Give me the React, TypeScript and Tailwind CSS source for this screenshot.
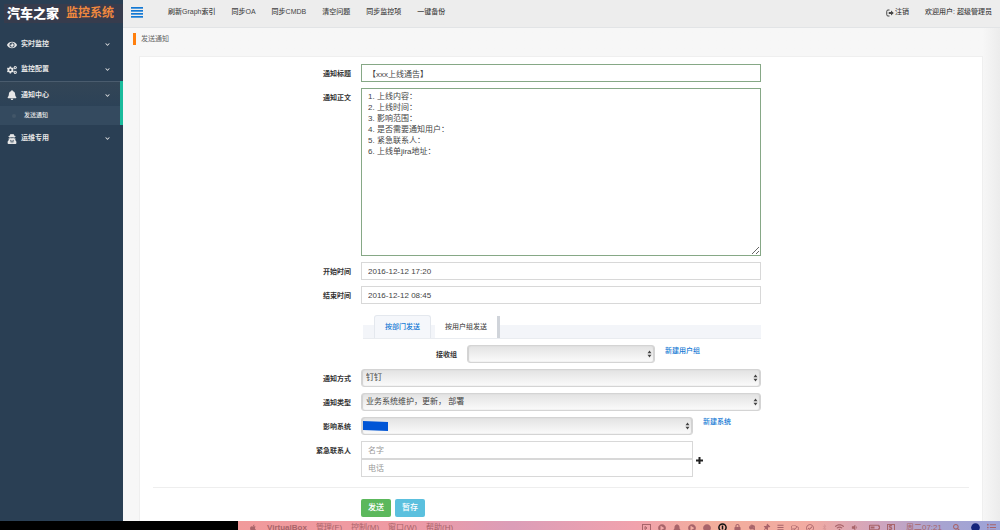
import React from 'react';
import {
  FaEye,
  FaCogs,
  FaBell,
  FaUserSecret,
  FaChevronDown,
  FaPlus,
  FaApple,
  FaEvernote,
  FaThumbtack,
  FaWifi,
  FaVolumeDown,
  FaLock,
  FaCircle,
  FaSearch,
  FaListUl,
  FaPlayCircle,
  FaBluetoothB,
  FaBars,
  FaRegComments,
  FaRegCheckCircle,
  FaBatteryHalf,
  FaStripeS,
} from 'react-icons/fa';
import { clsx } from 'clsx';

const tools = ['刷新Graph索引', '同步OA', '同步CMDB', '清空问题', '同步监控项', '一键备份'];

const menu = [
  { label: '实时监控', icon: FaEye },
  { label: '监控配置', icon: FaCogs },
  { label: '通知中心', icon: FaBell, children: ['发送通知'] },
  { label: '运维专用', icon: FaUserSecret },
];

const body = `1. 上线内容：
2. 上线时间：
3. 影响范围：
4. 是否需要通知用户：
5. 紧急联系人：
6. 上线单jira地址：`;

function Sidebar() {
  return (
    <aside className="w-[123px] shrink-0 bg-[#2a3f54] text-[#e7e7e7]">
      <div className="mt-1 ml-1 flex h-[19px] items-center gap-[7px] bg-[#373c4d] pl-[3px] whitespace-nowrap">
        <span className="text-[13px] font-black leading-[19px] text-white">汽车之家</span>
        <span className="text-[12px] font-bold leading-[19px] text-[#f0883e]">监控系统</span>
      </div>
      <nav className="mt-2 text-[7px] font-bold">
        {menu.map(({ label, icon: Icon, children }) => (
          <div key={label} className={clsx(children && 'border-r-[3px] border-[#1abb9c]')}>
            <a
              href="#"
              className={clsx(
                'flex h-[25px] items-center pt-0.5 pl-[7px]',
                children
                  ? 'border-t border-t-[#4a5c6e] bg-linear-to-b from-[#334556] to-[#2c4257] pr-[10px]'
                  : 'pr-[13px]'
              )}
            >
              <Icon size={10} className="mr-1" />
              <span className="flex-1">{label}</span>
              <FaChevronDown size={5} />
            </a>
            {children?.map((child) => (
              <a key={child} href="#" className="flex h-[19px] items-center bg-[#344a5f] pl-3 text-[6px] font-medium">
                <span className="mr-2 h-1 w-1 rounded-full bg-[#425668]" />
                {child}
              </a>
            ))}
          </div>
        ))}
      </nav>
    </aside>
  );
}

function SignOutIcon() {
  return (
    <svg width="8" height="8" viewBox="0 0 16 16" fill="none">
      <path d="M7 2H4a2.500 2.500 0 0 0-2.500 2.500v7A2.500 2.500 0 0 0 4 14h3" stroke="currentColor" strokeWidth="2" />
      <path d="M5.500 6.200H10V3l5.500 5-5.500 5V9.800H5.500z" fill="currentColor" />
    </svg>
  );
}

function TopBar() {
  return (
    <header className="flex h-7 items-center border-b border-[#e2e4e6] bg-[#ededed] pr-2 pb-0.5 pl-2 text-[7px] font-medium text-[#444]">
      <button type="button" aria-label="菜单" className="text-[#1479d4]">
        <svg width="12" height="12" viewBox="0 0 12 12" fill="currentColor">
          <rect y="0" width="12" height="1.700" />
          <rect y="3" width="12" height="1.700" />
          <rect y="6" width="12" height="1.700" />
          <rect y="9" width="12" height="1.700" />
        </svg>
      </button>
      <nav className="ml-[25px] flex flex-1 gap-4">
        {tools.map((t) => (
          <a key={t} href="#">{t}</a>
        ))}
      </nav>
      <a href="#" className="flex items-center gap-px">
        <SignOutIcon />
        注销
      </a>
      <span className="ml-4">欢迎用户: 超级管理员</span>
    </header>
  );
}

function Row({ label, htmlFor, children }: { label?: string; htmlFor?: string; children: React.ReactNode }) {
  return (
    <div className="grid grid-cols-[1fr_2fr_1fr]">
      <div className="h-[18px] pr-0.5 text-right text-[7px] font-bold leading-5 text-[#333]">
        {label && <label htmlFor={htmlFor}>{label}</label>}
      </div>
      <div className="px-2">{children}</div>
    </div>
  );
}

function Select({ id, options, className, children }: {
  id: string;
  options: string[];
  className?: string;
  children?: React.ReactNode;
}) {
  return (
    <div className={clsx('relative', className)}>
      <select
        id={id}
        className="block h-[18px] w-full appearance-none rounded-[3px] border border-[#d4d4d4] bg-linear-to-b from-[#e3e3e3] to-[#fbfbfb] px-1 text-[8px] leading-4 text-[#444] shadow-[inset_1px_0_1px_#d0d0d0,inset_-1px_0_1px_#d0d0d0]"
      >
        {options.map((o) => (
          <option key={o}>{o}</option>
        ))}
      </select>
      {children}
      <svg className="pointer-events-none absolute top-[5px] right-[3px]" width="5" height="8" viewBox="0 0 5 8" fill="#444">
        <path d="M2.500 0.500L4.500 3.300H0.500zM2.500 7.500L0.500 4.700H4.500z" />
      </svg>
    </div>
  );
}

const inputClass = 'block h-[18px] w-full border border-[#d8d8d8] bg-white px-1.5 text-[8px] text-[#444] placeholder:text-[#999]';

function NoticeForm() {
  return (
    <form className="border border-[#efefef] bg-white px-[5px] pt-[7px] pb-1">
      <div className="space-y-1.5">
        <Row label="通知标题" htmlFor="title">
          <input
            id="title"
            defaultValue="【xxx上线通告】"
            className="block h-[18px] w-full border border-[#86a886] px-1.5 text-[8px] text-[#444]"
          />
        </Row>
        <Row label="通知正文" htmlFor="body">
          <textarea
            id="body"
            defaultValue={body}
            className="block h-[168px] w-full resize border border-[#86a886] px-1.5 py-0.5 text-[8px] leading-[11px] text-[#444]"
          />
        </Row>
        <Row label="开始时间" htmlFor="start">
          <input id="start" defaultValue="2016-12-12 17:20" className={inputClass} />
        </Row>
        <Row label="结束时间" htmlFor="end">
          <input id="end" defaultValue="2016-12-12 08:45" className={inputClass} />
        </Row>
        <Row>
          <div className="pt-[15px]">
            <div className="ml-0.5 flex h-[14px] items-end gap-1 border-b border-[#e9ecf0] bg-[#f3f5f9] pl-[11px] text-[7px] font-medium" role="tablist">
              <button type="button" role="tab" className="h-[23px] rounded-t-[3px] border border-b-0 border-[#e4e8ee] bg-[#f5f7fb] px-[10px] text-[#1479d4]">
                按部门发送
              </button>
              <button type="button" role="tab" aria-selected="true" className="h-[22px] border-r-[3px] border-[#d0d4da] bg-white px-[10px] text-[#555]">
                按用户组发送
              </button>
            </div>
            <div className="flex gap-2.5 pt-1.5 text-[7px]">
              <label htmlFor="group" className="h-[18px] w-24 text-right font-bold leading-5 text-[#333]">接收组</label>
              <Select id="group" options={['']} className="w-[47%]" />
              <a href="#" className="font-medium leading-3 text-[#1479d4]">新建用户组</a>
            </div>
          </div>
        </Row>
        <Row label="通知方式" htmlFor="channel">
          <Select id="channel" options={['钉钉']} />
        </Row>
        <Row label="通知类型" htmlFor="kind">
          <Select id="kind" options={['业务系统维护，更新， 部署']} />
        </Row>
        <Row label="影响系统" htmlFor="system">
          <div className="flex gap-2.5 text-[7px]">
            <Select id="system" options={['']} className="w-[83%]">
              <svg className="pointer-events-none absolute top-1 left-0.5" width="25" height="10" viewBox="0 0 25 10">
                <path d="M0 0L25 1V10L0 9z" fill="#0055d6" />
              </svg>
            </Select>
            <a href="#" className="font-medium leading-[10px] whitespace-nowrap text-[#1479d4]">新建系统</a>
          </div>
        </Row>
        <Row label="紧急联系人" htmlFor="name">
          <div className="flex items-center gap-[3px]">
            <div className="w-[83%]">
              <input id="name" placeholder="名字" className={inputClass} />
              <input aria-label="电话" placeholder="电话" className={inputClass} />
            </div>
            <button type="button" aria-label="添加联系人" className="pt-0.5 text-[#222]">
              <svg width="7" height="7" viewBox="0 0 7 7" fill="currentColor">
                <path d="M2.500 0h2v2.500H7v2H4.500V7h-2V4.500H0v-2h2.500z" />
              </svg>
            </button>
          </div>
        </Row>
      </div>
      <hr className="mx-2 mt-[10px] mb-[11px] border-[#eee]" />
      <Row>
        <div className="flex gap-1 text-[8px] font-medium text-white">
          <button type="submit" className="h-[18px] rounded-[2px] bg-[#5cb85c] px-[7px]">发送</button>
          <button type="button" className="h-[18px] rounded-[2px] bg-[#5bc0de] px-[7px]">暂存</button>
        </div>
      </Row>
    </form>
  );
}

function MenuBar() {
  return (
    <footer className="flex h-[9px] shrink-0 overflow-hidden bg-black">
      <div className="ml-[238px] flex h-[13px] flex-1 items-center bg-[linear-gradient(to_right,#f19a9b,#ee9aa4_22%,#dc9db8_36%,#f1a2ad_52%,#f2ae9c_62%,#f2aba2_75%,#d0a5be_84%,#a8a4d0_92%,#9da3d8)] pr-1 pl-[11px] text-[8px] whitespace-nowrap text-[#a8646a]">
        <FaApple size={8} />
        <div className="ml-[10px] flex flex-1 gap-[9px]">
          <b>VirtualBox</b>
          <span>管理(F)</span>
          <span>控制(M)</span>
          <span>窗口(W)</span>
          <span>帮助(H)</span>
        </div>
        <div className="flex items-center gap-[7px]">
          <svg width="9" height="8" viewBox="0 0 9 8" fill="none" stroke="currentColor">
            <rect x="0.5" y="0.5" width="8" height="7" />
            <path d="M3 2.500v3l2-1.500z" />
          </svg>
          <FaPlayCircle size={8} />
          <FaBell size={8} />
          <FaPlayCircle size={8} />
          <FaCircle size={8} />
          <svg width="9" height="9" viewBox="0 0 9 9" fill="none" stroke="#111" strokeWidth="1.500">
            <circle cx="4.500" cy="4.500" r="3.600" />
            <path d="M4.500 2.500v4" />
          </svg>
          <FaLock size={7} />
          <FaEvernote size={8} />
          <FaThumbtack size={7} className="rotate-45" />
          <FaBars size={7} />
          <FaRegComments size={8} />
          <FaRegCheckCircle size={8} />
          <FaBluetoothB size={7} className="opacity-30" />
          <FaWifi size={9} />
          <FaVolumeDown size={7} />
          <FaBatteryHalf size={11} className="ml-1" />
          <span className="flex h-2 w-2 items-center justify-center border border-current">
            <FaStripeS size={5} />
          </span>
          <span className="mx-1">周二07:21</span>
          <FaSearch size={7} />
          <FaCircle size={9} className="ml-1 text-[#15257c]" />
          <FaListUl size={9} />
        </div>
      </div>
    </footer>
  );
}

export default function App() {
  return (
    <div className="flex h-screen flex-col overflow-hidden bg-[#f7f7f7] font-['Liberation_Sans','Noto_Sans_CJK_SC',sans-serif]">
      <div className="flex min-h-0 flex-1">
        <Sidebar />
        <div className="min-w-0 flex-1 bg-linear-to-r from-[#f7f7f7] from-98% to-[#ececec]">
          <TopBar />
          <main className="pr-[17px] pl-4">
            <h1 className="-ml-[6px] flex h-7 items-center pb-1.5 text-[7px] text-[#666]">
              <span className="mr-[5px] h-3 w-[3px] bg-[#ff7f0e]" />
              发送通知
            </h1>
            <NoticeForm />
          </main>
        </div>
      </div>
      <MenuBar />
    </div>
  );
}
